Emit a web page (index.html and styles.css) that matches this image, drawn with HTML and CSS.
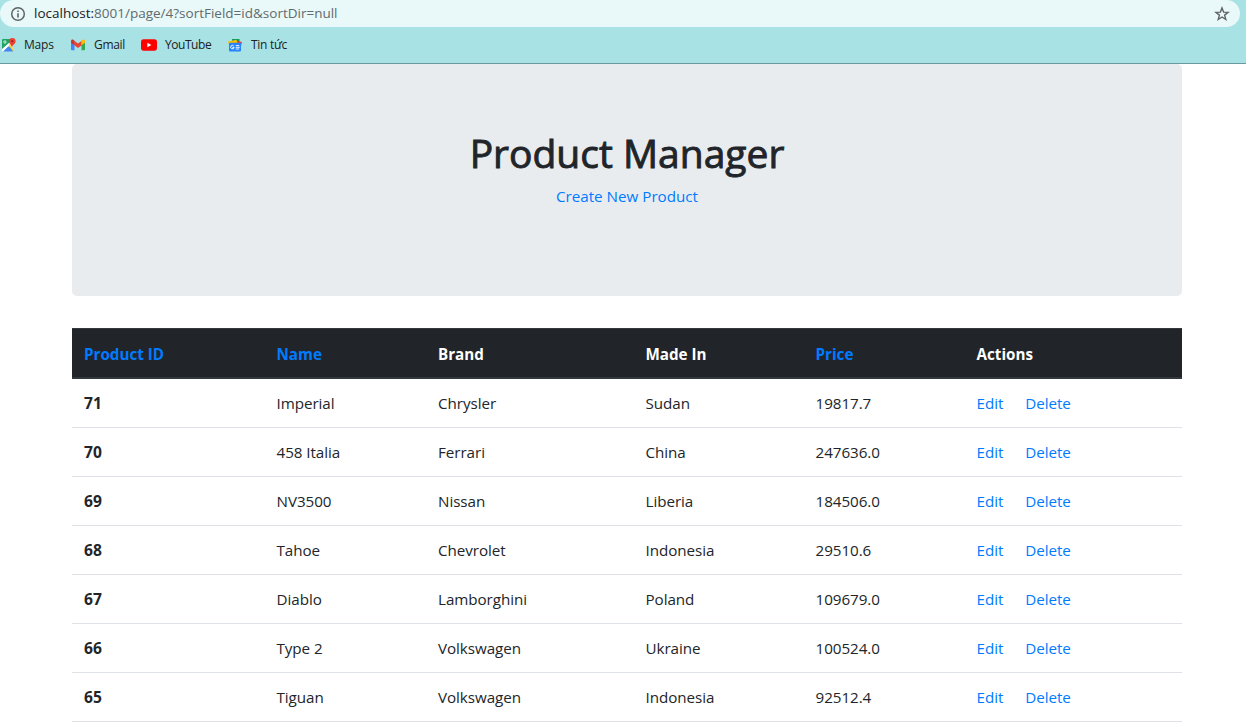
FILE: index.html
```html
<!DOCTYPE html>
<html lang="en">
<head>
<meta charset="utf-8">
<title>Product Manager</title>
<link rel="stylesheet" href="styles.css">
</head>
<body>
<header class="browser">
  <div class="address">
    <svg class="info" viewBox="0 0 16 16" width="16" height="16"><circle cx="8" cy="8" r="6.3" fill="none" stroke="#5f6368" stroke-width="1.5"/><path d="M7.2 7.2h1.6v4.2H7.2zM7.2 4.5h1.6v1.6H7.2z" fill="#5f6368"/></svg>
    <span class="url"><span class="host">localhost:</span>8001/page/4?sortField=id&amp;sortDir=null</span>
    <svg class="star" viewBox="0 0 16 16" width="16" height="16"><path d="M8 1.9l1.6 4.2 4.5.2-3.5 2.8 1.2 4.4L8 11l-3.8 2.5 1.2-4.4-3.5-2.8 4.5-.2z" fill="none" stroke="#5f6368" stroke-width="1.4"/></svg>
  </div>
  <nav class="bookmarks">
    <a class="bookmark maps"><svg viewBox="0 0 16 16" width="16" height="16"><path d="M2 3q0-1 1-1h9v12H3q-1 0-1-1z" fill="#1fa463"/><path d="M2 12l8-7 1 3-7 6.5H3q-1 0-1-1z" fill="#fff"/><path d="M10 6l4 7-1 1.5L9 9z" fill="#fdd440"/><path d="M3 14.5l5.5-5.3 4.8 5.3z" fill="#4285f4"/><path d="M12 10C11.7 7.6 9 7 9 4.2a3.3 3.3 0 0 1 6.6 0C15.600 7 12.600 7.6 12 10z" fill="#ea4335"/><circle cx="12.300" cy="4.200" r="1.100" fill="#a52714"/><circle cx="4.900" cy="5" r="1.200" fill="none" stroke="#fff" stroke-width=".8"/></svg><span>Maps</span></a>
    <a class="bookmark gmail"><svg viewBox="0 0 16 16" width="16" height="16"><path d="M1 4.500l3.500 2.400V13.300H2q-1 0-1-1z" fill="#4285f4"/><path d="M15 4.500l-3.500 2.400V13.300H14q1 0 1-1z" fill="#34a853"/><path d="M4.300 3.800L8 6.600l3.700-2.800v4.400L8 11 4.300 8.200z" fill="#ea4335"/><path d="M1 4.200C1 2.400 2.600 2.200 3.600 3l.9.700v4.600L1 5.800z" fill="#d3302a"/><path d="M15 4.200c0-1.800-1.600-2-2.600-1.200l-.9.700v4.600L15 5.800z" fill="#fbbc04"/></svg><span>Gmail</span></a>
    <a class="bookmark youtube"><svg viewBox="0 0 16 16" width="16" height="16"><rect x="0" y="2.300" width="16" height="11.400" rx="2.600" fill="#f00"/><path d="M6.400 5.800v4.400L10.400 8z" fill="#fff"/></svg><span>YouTube</span></a>
    <a class="bookmark news"><svg viewBox="0 0 16 16" width="16" height="16"><path d="M5 2h7.500v4H5z" fill="#0c9d58"/><path d="M10 3.700l5 1.200-1.500 6H10z" fill="#ea4335"/><path d="M1 4.400l8.500-1.600 1.200 4H1.700z" fill="#fbbc04"/><rect x="2" y="5.800" width="12" height="8.700" rx="1" fill="#2684fc"/><path d="M6.700 9a1.700 1.700 0 1 0 .4 1.400H5.500" fill="none" stroke="#fff" stroke-width="1"/><path d="M8.700 8.600h3.500M8.700 10.300h4M8.700 12h3.500" stroke="#fff" stroke-width=".9"/></svg><span>Tin tức</span></a>
  </nav>
</header>
<main class="container">
  <section class="jumbotron">
    <h1 class="title">Product Manager</h1>
    <a class="link">Create New Product</a>
  </section>
  <table class="products">
    <colgroup><col class="col-id"><col class="col-name"><col class="col-brand"><col class="col-made"><col class="col-price"><col></colgroup>
    <thead><tr><th><a class="link">Product ID</a></th><th><a class="link">Name</a></th><th>Brand</th><th>Made In</th><th><a class="link">Price</a></th><th>Actions</th></tr></thead>
    <tbody>
      <tr><th>71</th><td>Imperial</td><td>Chrysler</td><td>Sudan</td><td>19817.7</td><td><a class="link edit">Edit</a><a class="link">Delete</a></td></tr>
      <tr><th>70</th><td>458 Italia</td><td>Ferrari</td><td>China</td><td>247636.0</td><td><a class="link edit">Edit</a><a class="link">Delete</a></td></tr>
      <tr><th>69</th><td>NV3500</td><td>Nissan</td><td>Liberia</td><td>184506.0</td><td><a class="link edit">Edit</a><a class="link">Delete</a></td></tr>
      <tr><th>68</th><td>Tahoe</td><td>Chevrolet</td><td>Indonesia</td><td>29510.6</td><td><a class="link edit">Edit</a><a class="link">Delete</a></td></tr>
      <tr><th>67</th><td>Diablo</td><td>Lamborghini</td><td>Poland</td><td>109679.0</td><td><a class="link edit">Edit</a><a class="link">Delete</a></td></tr>
      <tr><th>66</th><td>Type 2</td><td>Volkswagen</td><td>Ukraine</td><td>100524.0</td><td><a class="link edit">Edit</a><a class="link">Delete</a></td></tr>
      <tr><th>65</th><td>Tiguan</td><td>Volkswagen</td><td>Indonesia</td><td>92512.4</td><td><a class="link edit">Edit</a><a class="link">Delete</a></td></tr>
    </tbody>
  </table>
</main>
</body>
</html>
```
FILE: styles.css
```css
* { box-sizing: border-box; }
body {
  margin: 0;
  height: 723px;
  overflow: hidden;
  background: #fff;
  color: #212529;
  font: 15.2px/24px "Open Sans", "Noto Sans", sans-serif;
}
.browser {
  height: 64px;
  background: #a8e2e4;
  border-bottom: 1px solid #6a9a9d;
}
.address {
  display: flex;
  align-items: center;
  width: 1240px;
  height: 27px;
  padding: 0 10px;
  border-radius: 14px;
  background: #e9f8f8;
}
.url {
  flex: 1;
  margin-left: 8px;
  padding-bottom: 2px;
  color: #5f6b6e;
  font-size: 13.5px;
}
.host { color: #202124; }
.bookmarks {
  display: flex;
  height: 36px;
  align-items: center;
  font-size: 12px;
  line-height: 16px;
  letter-spacing: -0.3px;
}
.bookmark { display: flex; align-items: center; gap: 8px; color: #202124; }
.maps { width: 70px; letter-spacing: -0.2px; }
.gmail { width: 71px; }
.youtube { width: 86px; letter-spacing: -0.45px; }
.container { width: 1110px; margin-left: 72px; }
.jumbotron {
  height: 232px;
  padding-top: 65px;
  border-radius: 5px;
  background: #e9ecef;
  text-align: center;
}
.title {
  margin: 0 0 7px;
  font-size: 39px;
  line-height: 48px;
  font-weight: 500;
  -webkit-text-stroke: 0.9px #212529;
}
.link { color: #007bff; }
.products {
  width: 100%;
  margin-top: 32px;
  table-layout: fixed;
  border-collapse: separate;
  border-spacing: 0;
}
.products th, .products td {
  height: 49px;
  padding: 0 12px;
  border-bottom: 1px solid #dee2e6;
  text-align: left;
}
.products td { letter-spacing: -0.05px; }
.products tbody th { font-size: 15.6px; }
.products thead th {
  height: 51px;
  padding-top: 1px;
  border-top: 1px solid #32383e;
  border-bottom: 2px solid #32383e;
  background: #212529;
  color: #fff;
}
.col-id { width: 192.5px; }
.col-name { width: 161.5px; }
.col-brand { width: 207.5px; }
.col-made { width: 170px; }
.col-price { width: 161px; }
.edit { margin-right: 22px; }
```
